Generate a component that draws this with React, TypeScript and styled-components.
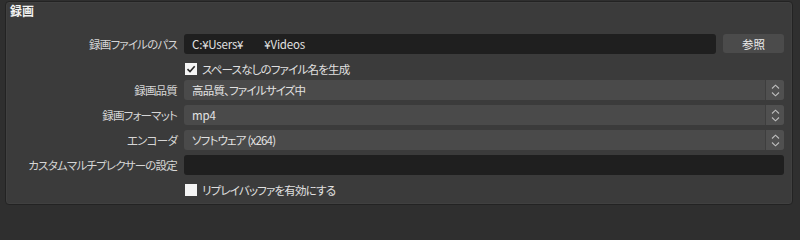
import React from "react";
import styled, { createGlobalStyle } from "styled-components";

const GlobalStyle = createGlobalStyle`
  html, body {
    margin: 0;
    padding: 0;
    background: #2f2f2f;
  }
  body {
    font-family: "Noto Sans CJK JP", "Noto Sans", sans-serif;
    font-size: 11.5px;
    letter-spacing: -0.8px;
    font-feature-settings: "palt";
    color: #dcdcdc;
  }
`;

export default function App() {
  return (
    <>
      <GlobalStyle />
      <Page>
        <Group>
          <Title>録画</Title>
          <Form>
            <Label>録画ファイルのパス</Label>
            <PathRow>
              <TextField>
                <FieldText $latin>C:¥Users¥</FieldText>
                <Gap />
                <FieldText $latin>¥Videos</FieldText>
              </TextField>
              <Button>参照</Button>
            </PathRow>

            <span />
            <CheckRow>
              <CheckBox $checked />
              <CheckText>スペースなしのファイル名を生成</CheckText>
            </CheckRow>

            <Label>録画品質</Label>
            <Select value="高品質、ファイルサイズ中" />

            <Label>録画フォーマット</Label>
            <Select value="mp4" $latin />

            <Label>エンコーダ</Label>
            <Select value="ソフトウェア (x264)" />

            <Label>カスタムマルチプレクサーの設定</Label>
            <TextField />

            <span />
            <CheckRow>
              <CheckBox />
              <CheckText>リプレイバッファを有効にする</CheckText>
            </CheckRow>
          </Form>
        </Group>
      </Page>
    </>
  );
}

function CheckBox({ $checked }: { $checked?: boolean }) {
  return (
    <Box>
      {$checked && (
        <svg width="10" height="10" viewBox="0 0 10 10">
          <path d="M1.5 5.2 L4 7.6 L8.7 2.2" fill="none" stroke="#2a2a2a" strokeWidth="1.6" />
        </svg>
      )}
    </Box>
  );
}

function Select({ value, $latin }: { value: string; $latin?: boolean }) {
  return (
    <SelectBox>
      <FieldText $latin={$latin}>{value}</FieldText>
      <Spin>
        <svg width="9" height="13" viewBox="0 0 9 13">
          <path d="M1 4.5 L4.5 1.2 L8 4.5" fill="none" stroke="#bdbdbd" strokeWidth="1.1" />
          <path d="M1 8.5 L4.5 11.8 L8 8.5" fill="none" stroke="#bdbdbd" strokeWidth="1.1" />
        </svg>
      </Spin>
    </SelectBox>
  );
}

const Page = styled.div`
  width: 800px;
  height: 218px;
  padding: 1px 7px 0 5px;
  box-sizing: border-box;
  overflow: hidden;
`;

const Group = styled.div`
  background: #3b3b3b;
  border: 1px solid #232323;
  border-radius: 4px;
  box-shadow: inset 0 0 0 1px #404040;
  height: 204px;
  box-sizing: border-box;
  padding: 1px 8px 0 0;
`;

const Title = styled.div`
  font-weight: 700;
  color: #f2f2f2;
  font-size: 12px;
  letter-spacing: 0;
  line-height: 16px;
  padding-left: 4px;
  height: 31px;
`;

const Form = styled.div`
  display: grid;
  grid-template-columns: 171px 1fr;
  column-gap: 7px;
  row-gap: 5px;
  align-items: center;
`;

const Label = styled.div`
  text-align: right;
  white-space: nowrap;
  color: #d6d6d6;
  line-height: 20px;
`;

const PathRow = styled.div`
  display: flex;
  gap: 7px;
  height: 20px;
`;

const TextField = styled.div`
  flex: 1;
  display: flex;
  align-items: center;
  height: 20px;
  background: #1f1f1f;
  border-radius: 3px;
  padding: 0 8px;
  box-sizing: border-box;
`;

const FieldText = styled.span<{ $latin?: boolean }>`
  color: #e2e2e2;
  white-space: pre;
  line-height: 20px;
  letter-spacing: ${(p) => (p.$latin ? "-0.2px" : "inherit")};
`;

const Gap = styled.span`
  width: 21px;
`;

const Button = styled.button`
  width: 61px;
  height: 19px;
  border: none;
  border-radius: 3px;
  background: #4b4b4b;
  color: #ececec;
  font: inherit;
  letter-spacing: 0;
  padding: 0;
`;

const CheckRow = styled.label`
  display: flex;
  align-items: center;
  gap: 5px;
  height: 16px;
  box-sizing: border-box;
  padding: 3px 0 0 1px;
`;

const Box = styled.span`
  width: 12px;
  height: 12px;
  background: #f4f4f4;
  display: flex;
  align-items: center;
  justify-content: center;
  flex: none;
`;

const CheckText = styled.span`
  color: #e0e0e0;
  white-space: nowrap;
`;

const SelectBox = styled.div`
  display: flex;
  align-items: center;
  height: 20px;
  background: #4a4a4a;
  border-radius: 3px;
  padding-left: 8px;
  box-sizing: border-box;
  ${FieldText} {
    flex: 1;
  }
`;

const Spin = styled.div`
  width: 18px;
  height: 20px;
  display: flex;
  align-items: center;
  justify-content: center;
  background: #505050;
  border-left: 1px solid #3e3e3e;
  border-radius: 0 3px 3px 0;
`;
